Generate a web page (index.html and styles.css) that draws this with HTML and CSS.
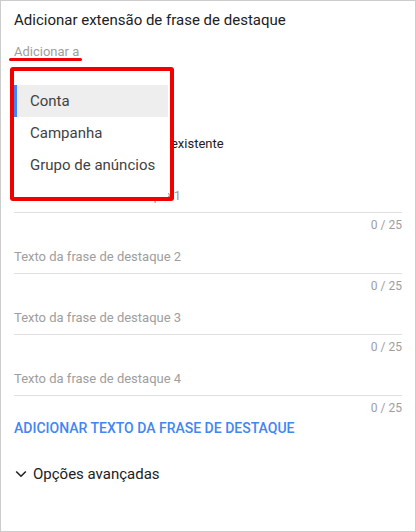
FILE: index.html
```html
<!DOCTYPE html>
<html lang="pt">
<head>
<meta charset="utf-8">
<link rel="stylesheet" href="styles.css">
</head>
<body>
<div class="panel">
  <div class="title">Adicionar extensão de frase de destaque</div>
  <div class="add-to">Adicionar a</div>
  <div class="choice"><span class="radio"></span><span>Usar extensão existente</span></div>
  <div class="fields">
    <div class="field">
      <div class="label">Texto da frase de destaque 1</div>
      <div class="counter">0 / 25</div>
    </div>
    <div class="field">
      <div class="label">Texto da frase de destaque 2</div>
      <div class="counter">0 / 25</div>
    </div>
    <div class="field">
      <div class="label">Texto da frase de destaque 3</div>
      <div class="counter">0 / 25</div>
    </div>
    <div class="field">
      <div class="label">Texto da frase de destaque 4</div>
      <div class="counter">0 / 25</div>
    </div>
  </div>
  <div class="add-btn">ADICIONAR TEXTO DA FRASE DE DESTAQUE</div>
  <div class="advanced">
    <svg class="chev" width="12" height="8" viewBox="0 0 12 8"><path d="M1.2 1.5 L6 6.2 L10.8 1.5" fill="none" stroke="#212121" stroke-width="1.6"/></svg>
    <span>Opções avançadas</span>
  </div>

  <div class="underline"></div>
  <div class="menu">
    <div class="item selected">Conta</div>
    <div class="item">Campanha</div>
    <div class="item">Grupo de anúncios</div>
  </div>
  <div class="highlight"></div>
</div>
</body>
</html>
```

FILE: styles.css
```css
html, body {
  margin: 0;
  padding: 0;
  background: #fff;
}
.panel {
  position: relative;
  box-sizing: border-box;
  width: 416px;
  height: 532px;
  border: 1px solid #cccccc;
  padding: 9px 13px 0 13px;
  font-family: Roboto, "Noto Sans", Arial, sans-serif;
  color: #212121;
  overflow: hidden;
}
.title {
  font-size: 15px;
  line-height: 20px;
  color: #212121;
}
.add-to {
  margin-top: 14px;
  font-size: 13px;
  line-height: 16px;
  color: #9e9e9e;
}
.choice {
  margin-top: 76px;
  display: flex;
  align-items: center;
  gap: 8px;
  padding-left: 47px;
  font-size: 13px;
  line-height: 16px;
  color: #212121;
}
.radio {
  width: 12px;
  height: 12px;
  border: 2px solid #757575;
  border-radius: 50%;
}
.fields {
  margin-top: 36px;
}
.field {
  margin-bottom: 16px;
}
.field:last-child {
  margin-bottom: 0;
}
.label {
  font-size: 13px;
  line-height: 16px;
  color: #9e9e9e;
  padding-bottom: 8px;
  border-bottom: 1px solid #e0e0e0;
}
.counter {
  margin-top: 4px;
  font-size: 12px;
  line-height: 16px;
  color: #9e9e9e;
  text-align: right;
}
.add-btn {
  margin-top: 4px;
  font-size: 14px;
  font-weight: 500;
  line-height: 16px;
  color: #4285f4;
}
.advanced {
  margin-top: 30px;
  display: flex;
  align-items: center;
  gap: 6px;
  font-size: 15px;
  line-height: 16px;
  color: #212121;
}
.chev {
  margin-left: 1px;
}
.underline {
  position: absolute;
  left: 8px;
  top: 57px;
  width: 73px;
  height: 3px;
  border-radius: 2px;
  background: #f20000;
}
.menu {
  position: absolute;
  left: 13px;
  top: 70px;
  width: 154px;
  height: 126px;
  box-sizing: border-box;
  padding-top: 14px;
  background: #fff;
}
.item {
  height: 32px;
  line-height: 32px;
  padding-left: 16px;
  font-size: 15px;
  color: #424242;
}
.item.selected {
  background: #eeeeee;
  border-left: 3px solid #4285f4;
  padding-left: 13px;
}
.highlight {
  position: absolute;
  left: 9px;
  top: 66px;
  width: 164px;
  height: 134px;
  box-sizing: border-box;
  border: 4px solid #f20000;
  border-radius: 3px;
}
```
